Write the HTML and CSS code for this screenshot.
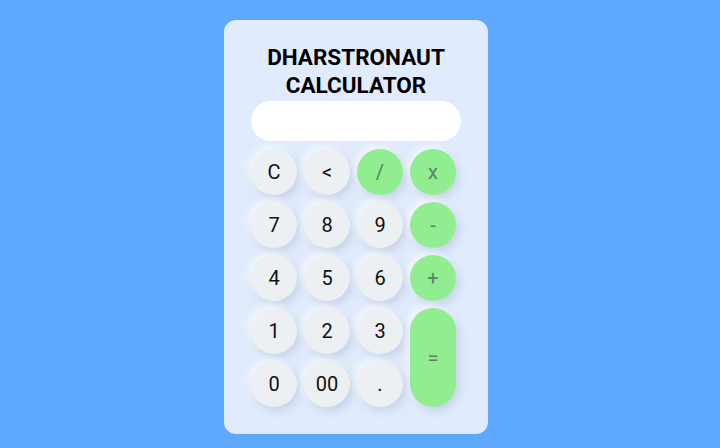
FILE: index.html
```html
<!DOCTYPE html>
<html>
<head>
<meta charset="utf-8">
<link rel="stylesheet" href="styles.css">
</head>
<body>
<div class="calc">
  <h1 class="title">DHARSTRONAUT<br>CALCULATOR</h1>
  <div class="display"></div>
  <div class="keys">
    <button class="key">C</button>
    <button class="key">&lt;</button>
    <button class="key op">/</button>
    <button class="key op">x</button>
    <button class="key">7</button>
    <button class="key">8</button>
    <button class="key">9</button>
    <button class="key op">-</button>
    <button class="key">4</button>
    <button class="key">5</button>
    <button class="key">6</button>
    <button class="key op">+</button>
    <button class="key">1</button>
    <button class="key">2</button>
    <button class="key">3</button>
    <button class="key op eq">=</button>
    <button class="key">0</button>
    <button class="key">00</button>
    <button class="key">.</button>
  </div>
</div>
</body>
</html>
```
FILE: styles.css
```css
html, body {
  margin: 0;
  padding: 0;
}
body {
  width: 720px;
  height: 448px;
  box-sizing: border-box;
  padding-right: 8px;
  background: #5ea8ff;
  display: flex;
  justify-content: center;
  align-items: flex-start;
  font-family: Roboto, "Liberation Sans", sans-serif;
}
.calc {
  margin-top: 20px;
  width: 264px;
  height: 414px;
  box-sizing: border-box;
  background: #e0ebfd;
  border-radius: 12px;
  padding: 23px 27px 27px;
  display: flex;
  flex-direction: column;
}
.title {
  margin: 0;
  text-align: center;
  font-size: 22.5px;
  line-height: 28px;
  font-weight: 700;
  color: #000;
}
.display {
  margin-top: 2px;
  height: 40px;
  background: #fff;
  border-radius: 20px;
}
.keys {
  margin-top: 8px;
  display: grid;
  grid-template-columns: repeat(4, 46px);
  grid-auto-rows: 46px;
  gap: 7px;
}
.key {
  border: none;
  border-radius: 23px;
  background: #edf0f3;
  font-family: Roboto, "Liberation Sans", sans-serif;
  font-size: 20px;
  color: #111;
  padding: 0;
  box-shadow: 3px 4px 8px rgba(150, 165, 190, 0.35), -3px -3px 7px rgba(255, 255, 255, 0.7);
}
.op {
  background: #90ee90;
  color: #5b7f6b;
}
.eq {
  grid-column: 4;
  grid-row: 4 / span 2;
}
```
